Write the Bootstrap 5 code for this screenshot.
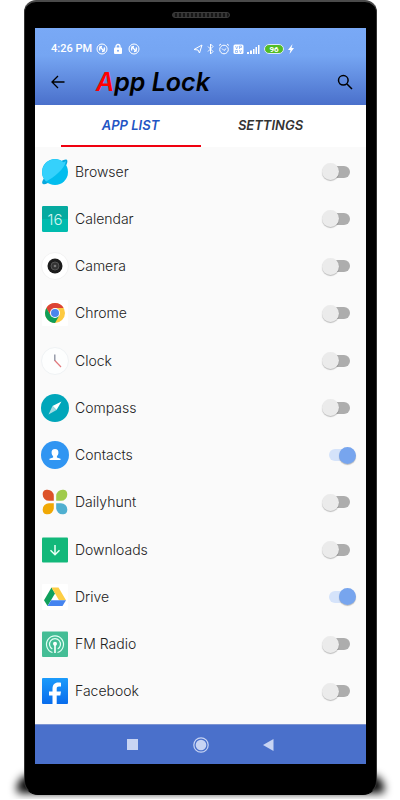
<!DOCTYPE html>
<html lang="en">
<head>
<meta charset="utf-8">
<meta name="viewport" content="width=device-width, initial-scale=1">
<title>App Lock</title>
<link href="https://cdn.jsdelivr.net/npm/bootstrap@5.3.0/dist/css/bootstrap.min.css" rel="stylesheet">
<style>
body { font-family: Inter, "Liberation Sans", sans-serif; background: #fff; color: #222; }
.phone { position: relative; margin: 0 23px 4px 24px; padding: 10px 10px 30px; background: #000; border: 1px solid #333; border-top: 2px solid #4a4a4a; border-bottom-color: #000; border-radius: 12px 12px 14px 14px; }
.phone::before { content: ""; position: absolute; z-index: -1; left: -8px; right: -8px; bottom: 1px; height: 18px; border-radius: 14px 14px 2px 2px; background: #000; filter: blur(4px); }
.speaker { width: 58px; height: 6px; margin: 0 auto 10px; border-radius: 3px; background: repeating-linear-gradient(90deg, #333 0 2px, #151515 2px 4px); border: 1px solid #3c3c3c; }
.app-head { height: 77px; background: linear-gradient(#79a9f6 0, #75a5f2 36%, #4a70cb 100%); }
.status { height: 41px; padding: 0 16px; color: #fff; font: 500 11px/16px Roboto, sans-serif; }
.status-left { gap: 4px; }
.status-icons { margin-right: 56px; gap: 3px; }
.title-bar { height: 26px; padding: 0 11px 0 13px; }
.icon-btn { width: 20px; height: 26px; padding: 0; border: 0; background: none; color: #000; line-height: 1; display: flex; align-items: center; justify-content: center; }
.app-title { margin: 0 0 0 28px; font: italic 600 25px/26px Inter, sans-serif; color: #000; }
.app-title span { color: #f00; }
.tabs { height: 42px; background: #fff; }
.tab-link { width: 140px; font: italic 600 13px/16px Inter, sans-serif; color: #333; text-decoration: none; display: flex; align-items: center; justify-content: center; border-bottom: 2px solid transparent; }
.tab-link.active { color: #1f55c4; border-color: #f0000f; }
.apps { background: #fafafa; padding: 1px 0 9px; }
.app-list { min-height: 567px; margin: 0; }
.app-row { gap: 6px; padding: 0 10px 0 6px; }
.app-row label { font-size: 14px; line-height: 20px; font-weight: 300; }
.app-icon { width: 28px; height: 28px; flex: none; }
.toggle { appearance: none; flex: none; display: grid; align-items: center; width: 34px; height: 20px; margin: 0; }
.toggle::before, .toggle::after { content: ""; grid-area: 1 / 1; }
.toggle::before { justify-self: center; width: 21px; height: 12px; border-radius: 6px; background: #adadad; }
.toggle::after { justify-self: start; width: 17px; height: 17px; border-radius: 50%; background: #ebebeb; box-shadow: 0 1px 1px rgba(0,0,0,.25); }
.toggle:checked::before { background: #d5e3fa; }
.toggle:checked::after { justify-self: end; background: #77a5ee; }
.sys-nav { height: 40px; gap: 48px; background: #4a70cb; border-top: 1px solid #7d94d2; }
.sys-nav .icon-btn { color: #c8d4f3; }
</style>
</head>
<body>
<main class="phone">
  <div class="speaker"></div>
  <header class="app-head">
    <div class="status d-flex align-items-center justify-content-between">
      <div class="status-left d-flex align-items-center">
        <span>4:26 PM</span>
        <svg width="12" height="12" viewBox="0 0 12 12" fill="none" stroke="#fff"><circle cx="6" cy="6" r="5"/><path d="M4 7.500A2.500 2.500 0 0 1 6 3.500M8 4.500A2.500 2.500 0 0 1 6 8.500M3.500 3.500l5 5" stroke-width="1.300"/></svg>
        <svg width="12" height="12" viewBox="-1 0 12 12"><path d="M3 5V3.500a2 2 0 0 1 4 0V5" fill="none" stroke="#fff" stroke-width="1.300"/><rect x="1" y="4.500" width="8" height="6.500" rx="1" fill="#fff"/><circle cx="5" cy="7.700" r="1" fill="#79a9f6"/></svg>
        <svg width="12" height="12" viewBox="0 0 12 12" fill="none" stroke="#fff"><circle cx="6" cy="6" r="5"/><path d="M4 7.500A2.500 2.500 0 0 1 6 3.500M8 4.500A2.500 2.500 0 0 1 6 8.500M3.500 3.500l5 5" stroke-width="1.300"/></svg>
      </div>
      <div class="status-icons d-flex align-items-center">
        <svg width="10" height="12" viewBox="0 0 10 12" fill="none" stroke="#fff"><path d="M1 6.500 9 2 6.500 10 5 7z"/></svg>
        <svg width="9" height="12" viewBox="0 0 9 12" fill="none" stroke="#fff"><path d="M2 3.500l5 5L4.500 11V1L7 3.500l-5 5"/></svg>
        <svg width="12" height="12" viewBox="0 0 12 12" fill="none" stroke="#fff"><circle cx="6" cy="6.500" r="4.300"/><path d="M4 5.500l2 2 2.200-2M1 2.500 3 1M11 2.500 9 1"/></svg>
        <svg width="11" height="12" viewBox="0 0 11 12"><rect x=".5" y="1.500" width="10" height="9.500" rx="1.500" fill="#fff"/><path d="M2.500 3l1.200 3L5 3M6.500 3v3M6.500 3h2v1.500h-2M2.500 7.500h2v2h-2zM6.500 7l1 3 1-3" stroke="#79a9f6" fill="none" stroke-width=".7"/></svg>
        <svg width="13" height="12" viewBox="0 0 13 12" fill="#fff"><path d="M0 9h2v2H0zM3 7.500h2V11H3zM6 6h1.500v5H6zM8.500 4H10v7H8.500zM11 2h1.500v9H11z"/></svg>
        <svg width="22" height="12" viewBox="0 0 22 12"><rect x="1.500" y="1.500" width="19" height="9" rx="4.500" fill="#52bd25" stroke="#dbe9fb"/><text x="11" y="9" text-anchor="middle" font-family="Roboto" font-size="8" font-weight="700" fill="#fff">96</text></svg>
        <svg width="6" height="12" viewBox="0 0 6 12" fill="#fff"><path d="M4.500 1 0 7h2.500L1.500 11 6 5H3.500z"/></svg>
      </div>
    </div>
    <div class="title-bar d-flex align-items-center">
      <button class="icon-btn" type="button" aria-label="Back"><svg width="14" height="14" viewBox="0 0 14 14" fill="none" stroke="#000" stroke-width="1.300"><path d="M13.500 7H1M7 1 1 7l6 6"/></svg></button>
      <h1 class="app-title"><span>A</span>pp Lock</h1>
      <button class="icon-btn ms-auto" type="button" aria-label="Search"><svg width="16" height="16" viewBox="0 0 16 16" fill="none" stroke="#000" stroke-width="1.500"><circle cx="6.300" cy="6.300" r="4.800"/><path d="M10 10l5 5"/></svg></button>
    </div>
  </header>
  <nav class="tabs d-flex justify-content-center" aria-label="Sections">
    <a class="tab-link active" href="#apps">APP LIST</a>
    <a class="tab-link" href="#settings">SETTINGS</a>
  </nav>
  <section class="apps" id="apps">
    <ul class="app-list list-unstyled d-flex flex-column">
      <li class="app-row d-flex align-items-center flex-fill">
        <svg class="app-icon" viewBox="0 0 28 28"><path d="M2 26c-2-1 0-5 3-8l5 5c-3 2-6 4-8 3zM26 2c1 1 0 5-3 8l-5-6c4-2 7-3 8-2z" fill="#07a7dc"/><circle cx="14" cy="14" r="13" fill="#02bdee"/><path d="M5 23.400A13 13 0 0 1 22.500 4.200L25 3c-1 7-12 17-20 20.400z" fill="#35d1fc"/></svg>
        <label for="a1">Browser</label><input class="toggle ms-auto" type="checkbox" role="switch" id="a1">
      </li>
      <li class="app-row d-flex align-items-center flex-fill">
        <svg class="app-icon" viewBox="0 0 28 28"><rect x="1" y="1" width="26" height="26" rx="1.500" fill="#00bbae"/><path d="M1 14V2.500A1.500 1.500 0 0 1 2.500 1h23A1.500 1.500 0 0 1 27 2.500V14z" fill="#05aaa0"/><text x="14" y="19.500" text-anchor="middle" font-family="Inter" font-weight="300" font-size="15" fill="#d2f5f0">16</text></svg>
        <label for="a2">Calendar</label><input class="toggle ms-auto" type="checkbox" role="switch" id="a2">
      </li>
      <li class="app-row d-flex align-items-center flex-fill">
        <svg class="app-icon" viewBox="0 0 28 28"><circle cx="14" cy="14" r="13.500" fill="#fff" stroke="#f2f2f2"/><circle cx="14" cy="14" r="7.500" fill="#1c1c1c"/><circle cx="14" cy="14" r="4" fill="#333" stroke="#555"/><circle cx="14" cy="14" r="1.300" fill="#777"/></svg>
        <label for="a3">Camera</label><input class="toggle ms-auto" type="checkbox" role="switch" id="a3">
      </li>
      <li class="app-row d-flex align-items-center flex-fill">
        <svg class="app-icon" viewBox="0 0 28 28"><rect x="1" y="1" width="26" height="26" rx="1" fill="#fff"/><circle cx="14" cy="14" r="10" fill="#fdca41"/><path d="M14 9h8.660A10 10 0 0 0 5.340 9L9.700 16.500z" fill="#dc4437"/><path d="M5.340 9A10 10 0 0 0 14 24l4.330-7.500L14 14l-4.330 2.500z" fill="#0e9d58"/><circle cx="14" cy="14" r="5" fill="#fff"/><circle cx="14" cy="14" r="4" fill="#4a85ec"/></svg>
        <label for="a4">Chrome</label><input class="toggle ms-auto" type="checkbox" role="switch" id="a4">
      </li>
      <li class="app-row d-flex align-items-center flex-fill">
        <svg class="app-icon" viewBox="0 0 28 28"><circle cx="14" cy="14" r="13.500" fill="#fdfefe" stroke="#eff2f4"/><path d="M13.800 7.500V14" stroke="#888d9e" stroke-width="1.300"/><path d="M13.800 13.500 20 20" stroke="#e3797d" stroke-width="1.200"/></svg>
        <label for="a5">Clock</label><input class="toggle ms-auto" type="checkbox" role="switch" id="a5">
      </li>
      <li class="app-row d-flex align-items-center flex-fill">
        <svg class="app-icon" viewBox="0 0 28 28"><circle cx="14" cy="14" r="14" fill="#00a6ba"/><path d="M20.500 7.500 11.500 12l4 4z" fill="#fff"/><path d="M7.500 20.500l4-8.500 4 4z" fill="#a5dde4"/></svg>
        <label for="a6">Compass</label><input class="toggle ms-auto" type="checkbox" role="switch" id="a6">
      </li>
      <li class="app-row d-flex align-items-center flex-fill">
        <svg class="app-icon" viewBox="0 0 28 28"><circle cx="14" cy="14" r="14" fill="#3095f2"/><path d="M14 8c2.500 0 3.600 1.600 3.400 4-.1 1.500-.8 2.500-1.500 3.200v1.300l3.600 1.200V19H8.500v-1.300l3.600-1.200v-1.300c-.7-.7-1.400-1.700-1.500-3.200C10.400 9.600 11.500 8 14 8z" fill="#fff"/></svg>
        <label for="a7">Contacts</label><input class="toggle ms-auto" type="checkbox" role="switch" id="a7" checked>
      </li>
      <li class="app-row d-flex align-items-center flex-fill">
        <svg class="app-icon" viewBox="0 0 28 28"><path d="M12.800 12.800H8a6.300 6.300 0 0 1-6.300-6.300C1.700 3 3.500 1.700 6.500 1.700A6.300 6.300 0 0 1 12.800 8z" fill="#dc5228"/><path d="M15.200 12.800H20a6.300 6.300 0 0 0 6.300-6.300c0-3.500-1.800-4.800-4.800-4.800A6.300 6.300 0 0 0 15.200 8z" fill="#a0cb4b"/><path d="M12.800 15.200H8a6.300 6.300 0 0 0-6.300 6.300c0 3.500 1.800 4.800 4.800 4.800A6.300 6.300 0 0 0 12.800 20z" fill="#f0a804"/><path d="M15.200 15.200H20a6.300 6.300 0 0 1 6.300 6.300c0 3.500-1.800 4.800-4.800 4.800A6.300 6.300 0 0 1 15.200 20z" fill="#4fafd0"/></svg>
        <label for="a8">Dailyhunt</label><input class="toggle ms-auto" type="checkbox" role="switch" id="a8">
      </li>
      <li class="app-row d-flex align-items-center flex-fill">
        <svg class="app-icon" viewBox="0 0 28 28"><rect x="1" y="1.500" width="26" height="25" rx="1" fill="#12b87a"/><path d="M14 9v9.500M9.500 14.300l4.500 4.500 4.500-4.500" fill="none" stroke="#e8fff5" stroke-width="1.500"/></svg>
        <label for="a9">Downloads</label><input class="toggle ms-auto" type="checkbox" role="switch" id="a9">
      </li>
      <li class="app-row d-flex align-items-center flex-fill">
        <svg class="app-icon" viewBox="0 0 28 28"><rect x="1" y="1" width="26" height="26" rx="1" fill="#fff"/><path d="M10.500 4.500 3 17.200 6.600 23 14 10.500z" fill="#10a05c"/><path d="M10.500 4.500h7L25 17.200h-7z" fill="#fdce45"/><path d="M10.200 17.200H25L21.500 23H6.600z" fill="#4584f0"/></svg>
        <label for="a10">Drive</label><input class="toggle ms-auto" type="checkbox" role="switch" id="a10" checked>
      </li>
      <li class="app-row d-flex align-items-center flex-fill">
        <svg class="app-icon" viewBox="0 0 28 28"><rect x="1" y="1.500" width="26" height="25.500" rx="1" fill="#44bd95"/><g fill="none" stroke="#e3fff4" stroke-width="1.200"><path d="M11.500 22.500a8.500 8.500 0 1 1 5 0M11.300 19a5.500 5.500 0 1 1 5.400 0"/></g><circle cx="14" cy="13.800" r="2" fill="#fff"/><path d="M13.200 15h1.600v8h-1.600z" fill="#fff"/></svg>
        <label for="a11">FM Radio</label><input class="toggle ms-auto" type="checkbox" role="switch" id="a11">
      </li>
      <li class="app-row d-flex align-items-center flex-fill">
        <svg class="app-icon" viewBox="0 0 28 28"><defs><linearGradient id="fb" x2="0" y2="1"><stop stop-color="#1b9bfb"/><stop offset="1" stop-color="#086cec"/></linearGradient></defs><rect x="1" y="1" width="26" height="26" rx="1" fill="url(#fb)"/><path d="M11.500 27v-8.500H8v-4h3.500V12c0-4.200 2-6.500 5.800-6.500 1.300 0 2.200.1 2.700.3v3.700h-2c-1.700 0-2.300.8-2.300 2.300v2.700H20l-.7 4h-3.600V27z" fill="#fff"/></svg>
        <label for="a12">Facebook</label><input class="toggle ms-auto" type="checkbox" role="switch" id="a12">
      </li>
    </ul>
  </section>
  <footer class="sys-nav d-flex align-items-center justify-content-center">
    <button class="icon-btn" type="button" aria-label="Recent apps"><svg width="11" height="11" viewBox="0 0 11 11"><path d="M0 0h11v11H0z" fill="currentColor"/></svg></button>
    <button class="icon-btn" type="button" aria-label="Home"><svg width="16" height="16" viewBox="0 0 16 16"><circle cx="8" cy="8" r="7.200" fill="none" stroke="currentColor" stroke-width="1.200"/><circle cx="8" cy="8" r="5.300" fill="currentColor"/></svg></button>
    <button class="icon-btn" type="button" aria-label="Go back"><svg width="11" height="12" viewBox="0 0 11 12"><path d="M10.500 0v12L0 6z" fill="currentColor"/></svg></button>
  </footer>
</main>
<script src="https://cdn.jsdelivr.net/npm/bootstrap@5.3.0/dist/js/bootstrap.bundle.min.js"></script>
</body>
</html>
